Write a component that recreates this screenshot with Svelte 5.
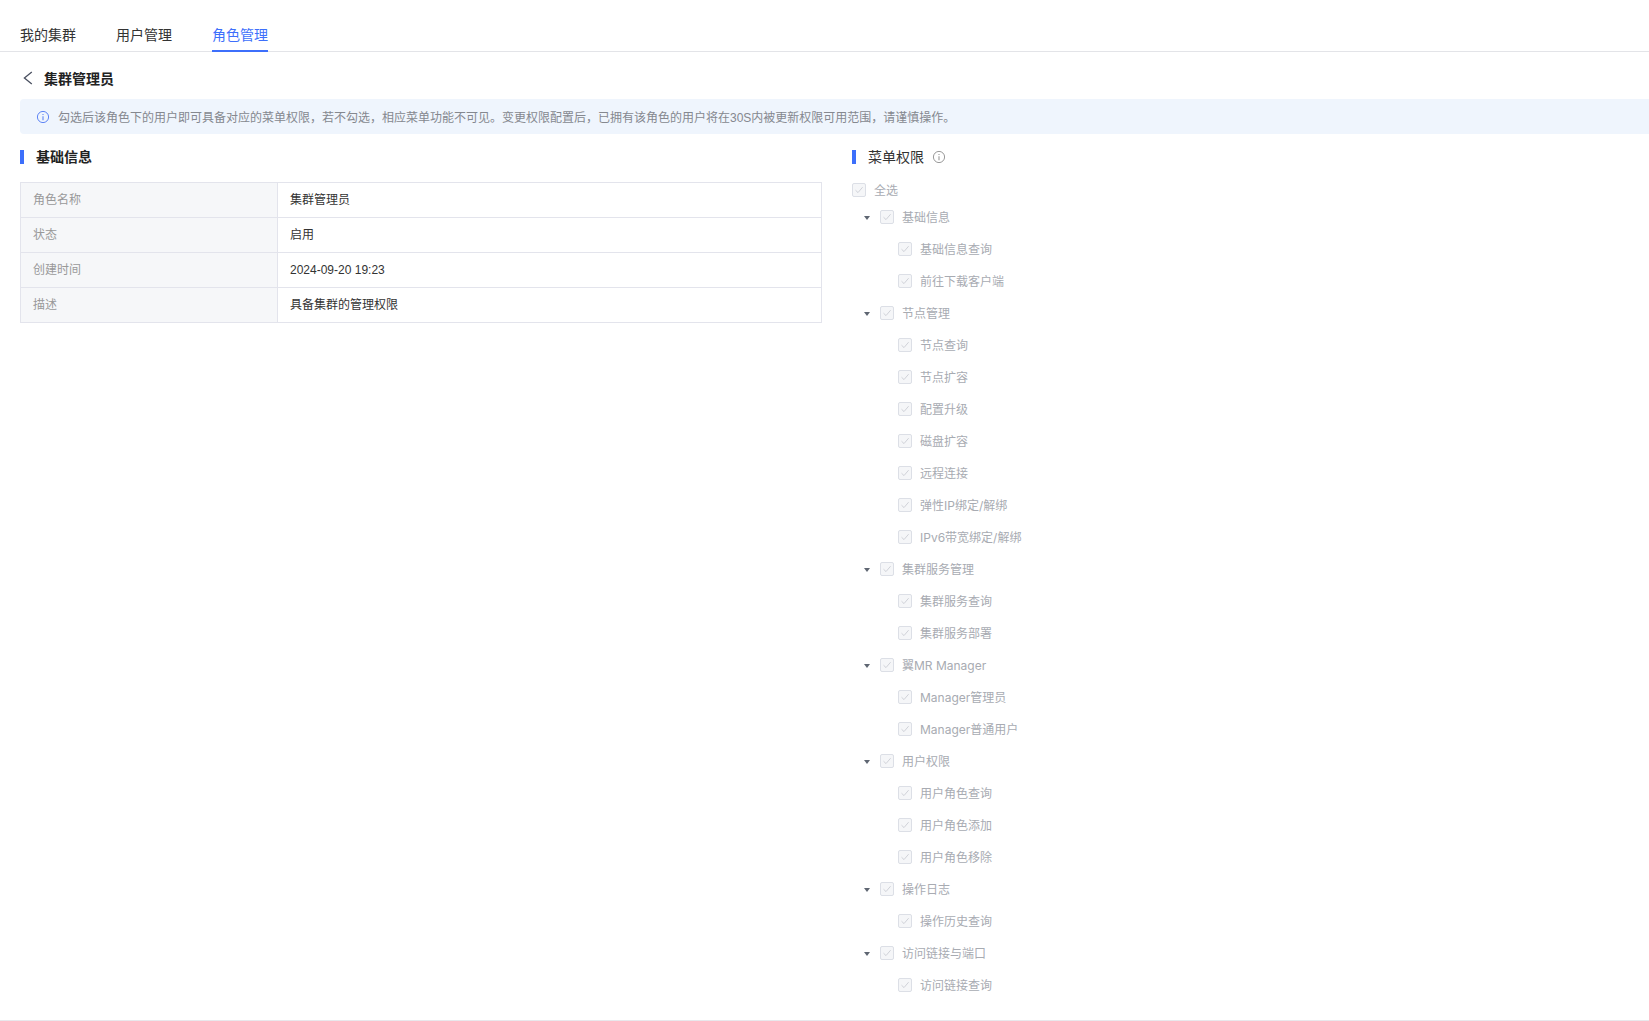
<script lang="ts">
  const tabs = ['我的集群', '用户管理', '角色管理'];
  const info = [
    ['角色名称', '集群管理员'],
    ['状态', '启用'],
    ['创建时间', '2024-09-20 19:23'],
    ['描述', '具备集群的管理权限']
  ];
  const tree = [
    { name: '基础信息', items: ['基础信息查询', '前往下载客户端'] },
    { name: '节点管理', items: ['节点查询', '节点扩容', '配置升级', '磁盘扩容', '远程连接', '弹性IP绑定/解绑', 'IPv6带宽绑定/解绑'] },
    { name: '集群服务管理', items: ['集群服务查询', '集群服务部署'] },
    { name: '翼MR Manager', items: ['Manager管理员', 'Manager普通用户'] },
    { name: '用户权限', items: ['用户角色查询', '用户角色添加', '用户角色移除'] },
    { name: '操作日志', items: ['操作历史查询'] },
    { name: '访问链接与端口', items: ['访问链接查询'] }
  ];
</script>

{#snippet check()}
  <span class="box">
    <svg width="10" height="10" viewBox="0 0 10 10" aria-hidden="true">
      <path d="M1.5 5.2 4 7.6 8.6 2.2" fill="none" stroke="#d0d2d8" stroke-width="1" />
    </svg>
  </span>
{/snippet}

{#snippet infoIcon(color: string)}
  <svg width="14" height="14" viewBox="0 0 14 14" aria-hidden="true">
    <circle cx="7" cy="7" r="5.6" fill="none" stroke={color} stroke-width="1" />
    <path d="M7 6.2v4" stroke={color} stroke-width="1.1" />
    <path d="M7 3.9v1.2" stroke={color} stroke-width="1.1" />
  </svg>
{/snippet}

<div class="page">
  <nav class="tabs">
    {#each tabs as tab, i}
      <span class="tab" class:active={i === 2}>{tab}</span>
    {/each}
  </nav>

  <div class="heading">
    <svg width="10" height="14" viewBox="0 0 10 14" aria-hidden="true">
      <path d="M8.8 1 1.4 7l7.4 6" fill="none" stroke="#4a5060" stroke-width="1.3" />
    </svg>
    <span>集群管理员</span>
  </div>

  <div class="notice">
    {@render infoIcon('#5f85f5')}
    <span>勾选后该角色下的用户即可具备对应的菜单权限，若不勾选，相应菜单功能不可见。变更权限配置后，已拥有该角色的用户将在30S内被更新权限可用范围，请谨慎操作。</span>
  </div>

  <div class="columns">
    <section class="basic">
      <h3 class="section-title">基础信息</h3>
      <div class="table">
        {#each info as [label, value]}
          <div class="label">{label}</div>
          <div class="value">{value}</div>
        {/each}
      </div>
    </section>

    <section class="menu">
      <h3 class="section-title light">菜单权限 <span class="tip">{@render infoIcon('#9a9a9a')}</span></h3>
      <div class="row all">{@render check()}<span>全选</span></div>
      {#each tree as group}
        <div class="row parent">
          <i class="caret"></i>
          {@render check()}
          <span>{group.name}</span>
        </div>
        {#each group.items as item}
          <div class="row child">{@render check()}<span>{item}</span></div>
        {/each}
      {/each}
    </section>
  </div>
</div>

<style>
  :global(body) {
    margin: 0;
    background: #fff;
  }
  .page {
    height: 1021px;
    box-sizing: border-box;
    border-bottom: 1px solid #e8e8ec;
    font-family: "Liberation Sans", "Noto Sans CJK SC", sans-serif;
    font-size: 12px;
    color: #333;
    overflow: hidden;
  }
  .tabs {
    display: flex;
    gap: 40px;
    height: 52px;
    box-sizing: border-box;
    padding-left: 20px;
    border-bottom: 1px solid #e3e4e8;
  }
  .tab {
    height: 52px;
    box-sizing: border-box;
    padding-top: 25px;
    font-size: 14px;
    line-height: 20px;
    color: #333;
  }
  .tab.active {
    color: #3d6ffb;
    border-bottom: 2px solid #3d6ffb;
  }
  .heading {
    display: flex;
    align-items: center;
    gap: 11px;
    height: 47px;
    box-sizing: border-box;
    padding: 5px 0 0 23px;
    font-size: 14px;
    font-weight: 700;
    color: #222;
  }
  .notice {
    display: flex;
    align-items: center;
    gap: 8px;
    height: 35px;
    margin-left: 20px;
    padding-left: 16px;
    border-radius: 4px 0 0 4px;
    background: #eff5fd;
    color: #85888f;
  }
  .columns {
    display: flex;
    gap: 30px;
    padding: 16px 0 0 20px;
  }
  .basic {
    width: 802px;
    flex: none;
  }
  .section-title {
    display: flex;
    align-items: center;
    height: 14px;
    margin: 0;
    padding-left: 12px;
    border-left: 4px solid #3d6ffb;
    font-size: 14px;
    line-height: 14px;
    font-weight: 700;
    color: #222;
  }
  .section-title.light {
    font-weight: 400;
    color: #333;
  }
  .tip {
    display: flex;
    margin-left: 8px;
  }
  .table {
    display: grid;
    grid-template-columns: 257px 1fr;
    margin-top: 18px;
    border: 1px solid #e3e4ec;
    border-bottom: 0;
  }
  .label,
  .value {
    height: 34px;
    line-height: 34px;
    border-bottom: 1px solid #e3e4ec;
  }
  .label {
    padding-left: 12px;
    background: #f6f7f9;
    border-right: 1px solid #e3e4ec;
    color: #999;
  }
  .value {
    padding-left: 12px;
    color: #333;
  }
  .menu {
    font-family: "Inter", "Noto Sans CJK SC", sans-serif;
  }
  .row {
    display: flex;
    align-items: center;
    height: 32px;
    color: #a8abb2;
  }
  .row > span:last-child {
    padding-bottom: 1px;
  }
  .all {
    height: 24px;
    margin-top: 14px;
    margin-bottom: -1px;
    gap: 8px;
  }
  .parent {
    padding-left: 12px;
    height: 32px;
  }
  .parent .box {
    margin: 0 8px 0 10px;
  }
  .caret {
    width: 0;
    height: 0;
    margin-top: 1px;
    border-left: 3.5px solid transparent;
    border-right: 3.5px solid transparent;
    border-top: 4px solid #5f6672;
  }
  .child {
    padding-left: 46px;
    gap: 8px;
  }
  .box {
    display: flex;
    align-items: center;
    justify-content: center;
    width: 14px;
    height: 14px;
    box-sizing: border-box;
    flex: none;
    border: 1px solid #dcdfe6;
    border-radius: 2px;
    background: #f5f6f8;
  }
</style>
